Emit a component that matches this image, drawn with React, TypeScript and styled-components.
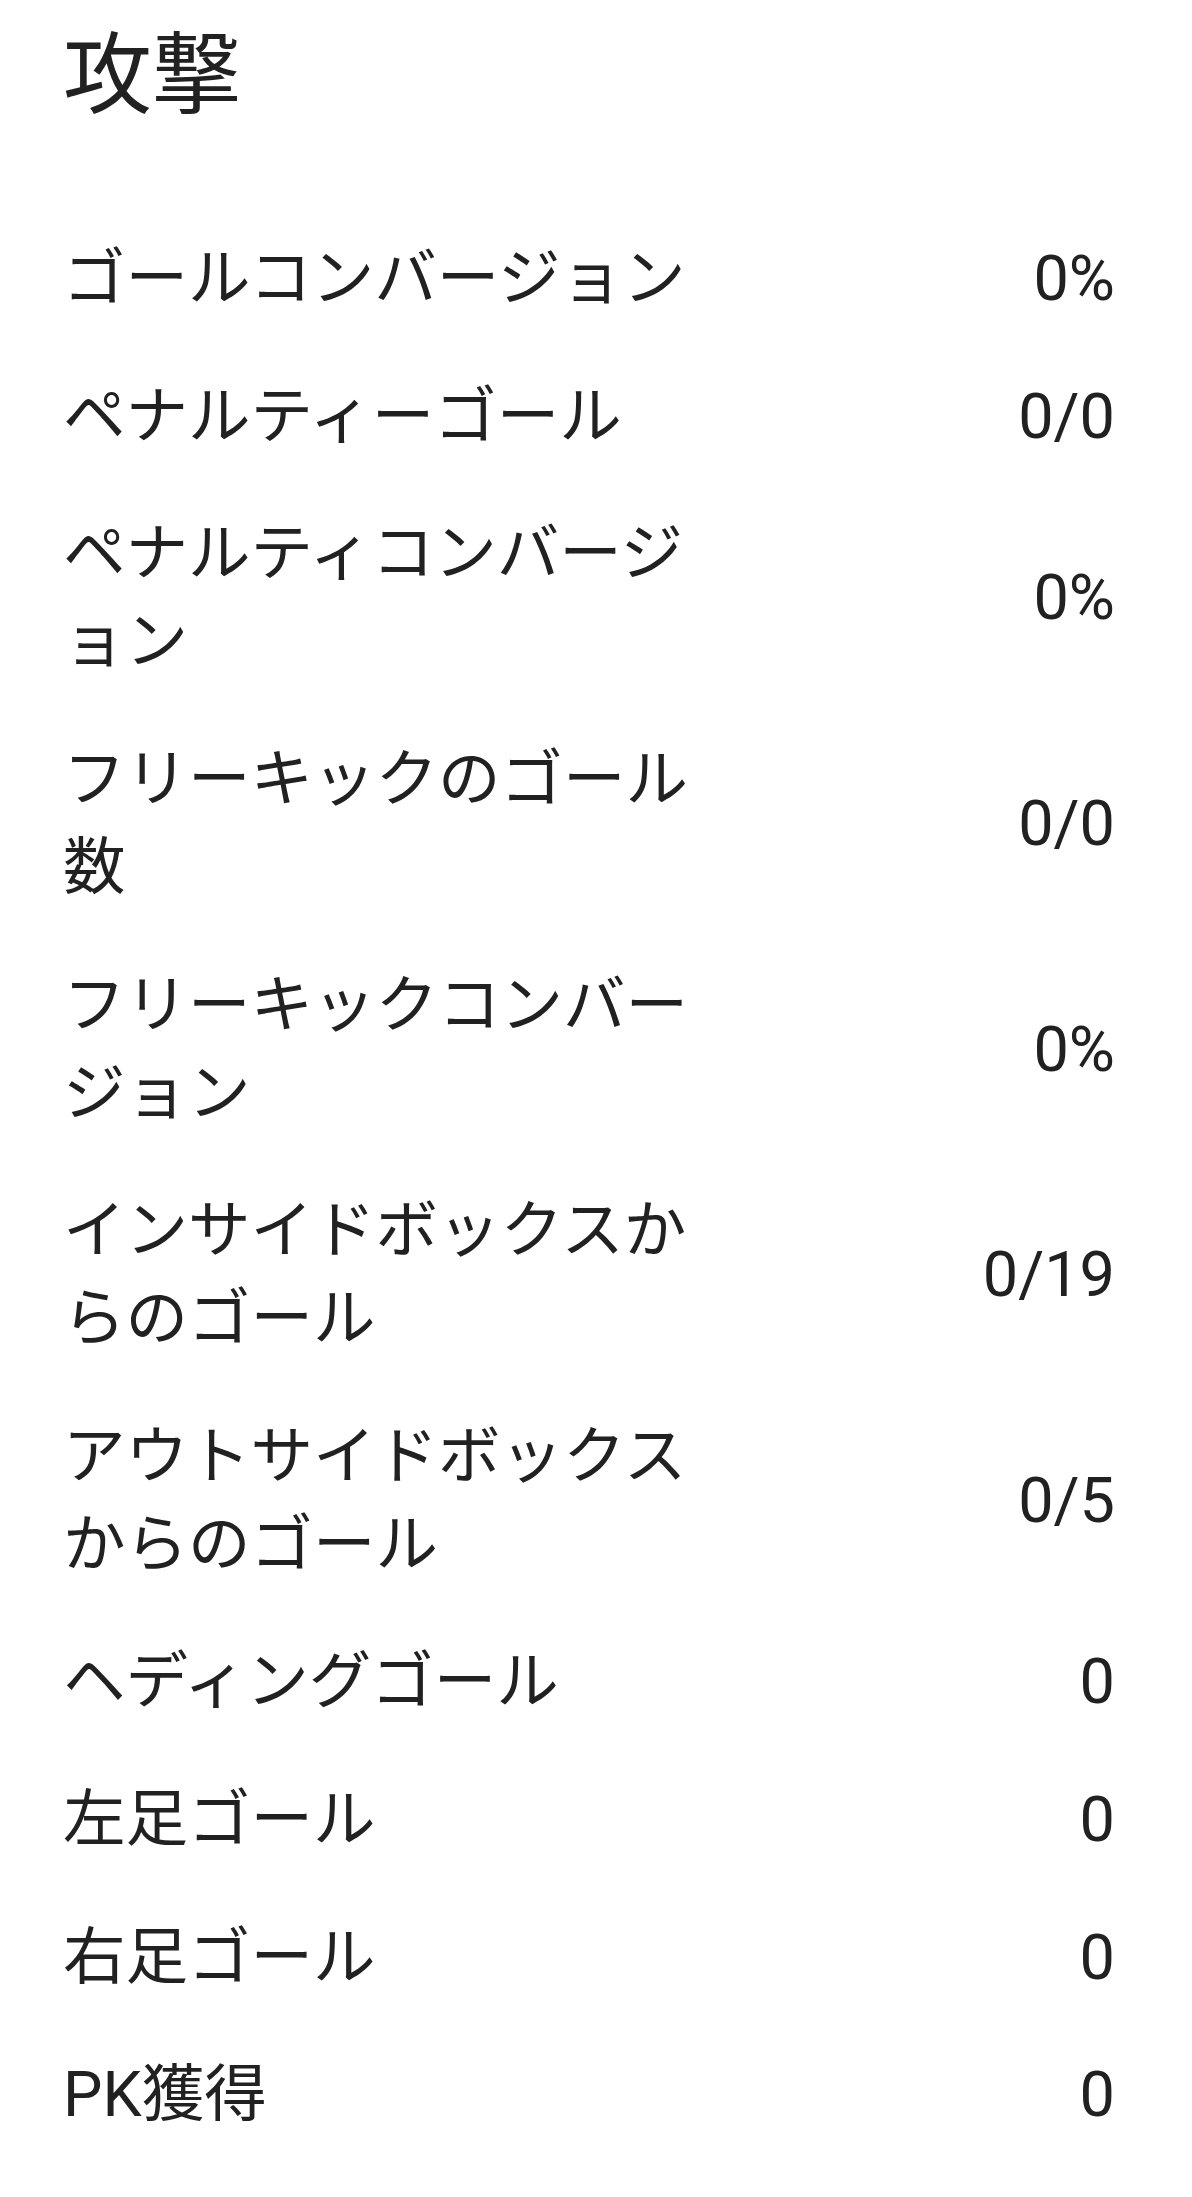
import React from "react";
import styled, { createGlobalStyle } from "styled-components";

const GlobalStyle = createGlobalStyle`
  html, body {
    margin: 0;
    padding: 0;
    background: #ffffff;
  }
  body {
    font-family: Roboto, "Noto Sans CJK JP", "Noto Sans", sans-serif;
    color: #212121;
  }
`;

const Page = styled.div`
  display: flex;
  flex-direction: column;
  padding: 26px 77px 30px 63px;
  background: #ffffff;
`;

const Title = styled.h1`
  margin: 0 0 84.5px 0;
  font-size: 89px;
  line-height: 100px;
  font-weight: 400;
  color: #212121;
`;

const List = styled.div`
  display: flex;
  flex-direction: column;
`;

const Row = styled.div`
  display: flex;
  align-items: center;
  justify-content: space-between;
  padding: 24.8px 0;
`;

const Label = styled.div`
  width: 640px;
  font-size: 62.5px;
  line-height: 88px;
  font-weight: 400;
  color: #212121;
  word-break: break-all;
`;

const Value = styled.div`
  font-size: 63px;
  line-height: 88px;
  font-weight: 400;
  color: #212121;
  text-align: right;
  white-space: nowrap;
`;

const stats: { label: string; value: string }[] = [
  { label: "ゴールコンバージョン", value: "0%" },
  { label: "ペナルティーゴール", value: "0/0" },
  { label: "ペナルティコンバージョン", value: "0%" },
  { label: "フリーキックのゴール数", value: "0/0" },
  { label: "フリーキックコンバージョン", value: "0%" },
  { label: "インサイドボックスからのゴール", value: "0/19" },
  { label: "アウトサイドボックスからのゴール", value: "0/5" },
  { label: "ヘディングゴール", value: "0" },
  { label: "左足ゴール", value: "0" },
  { label: "右足ゴール", value: "0" },
  { label: "PK獲得", value: "0" },
];

export default function App() {
  return (
    <>
      <GlobalStyle />
      <Page>
        <Title>攻撃</Title>
        <List>
          {stats.map((s) => (
            <Row key={s.label}>
              <Label>{s.label}</Label>
              <Value>{s.value}</Value>
            </Row>
          ))}
        </List>
      </Page>
    </>
  );
}
